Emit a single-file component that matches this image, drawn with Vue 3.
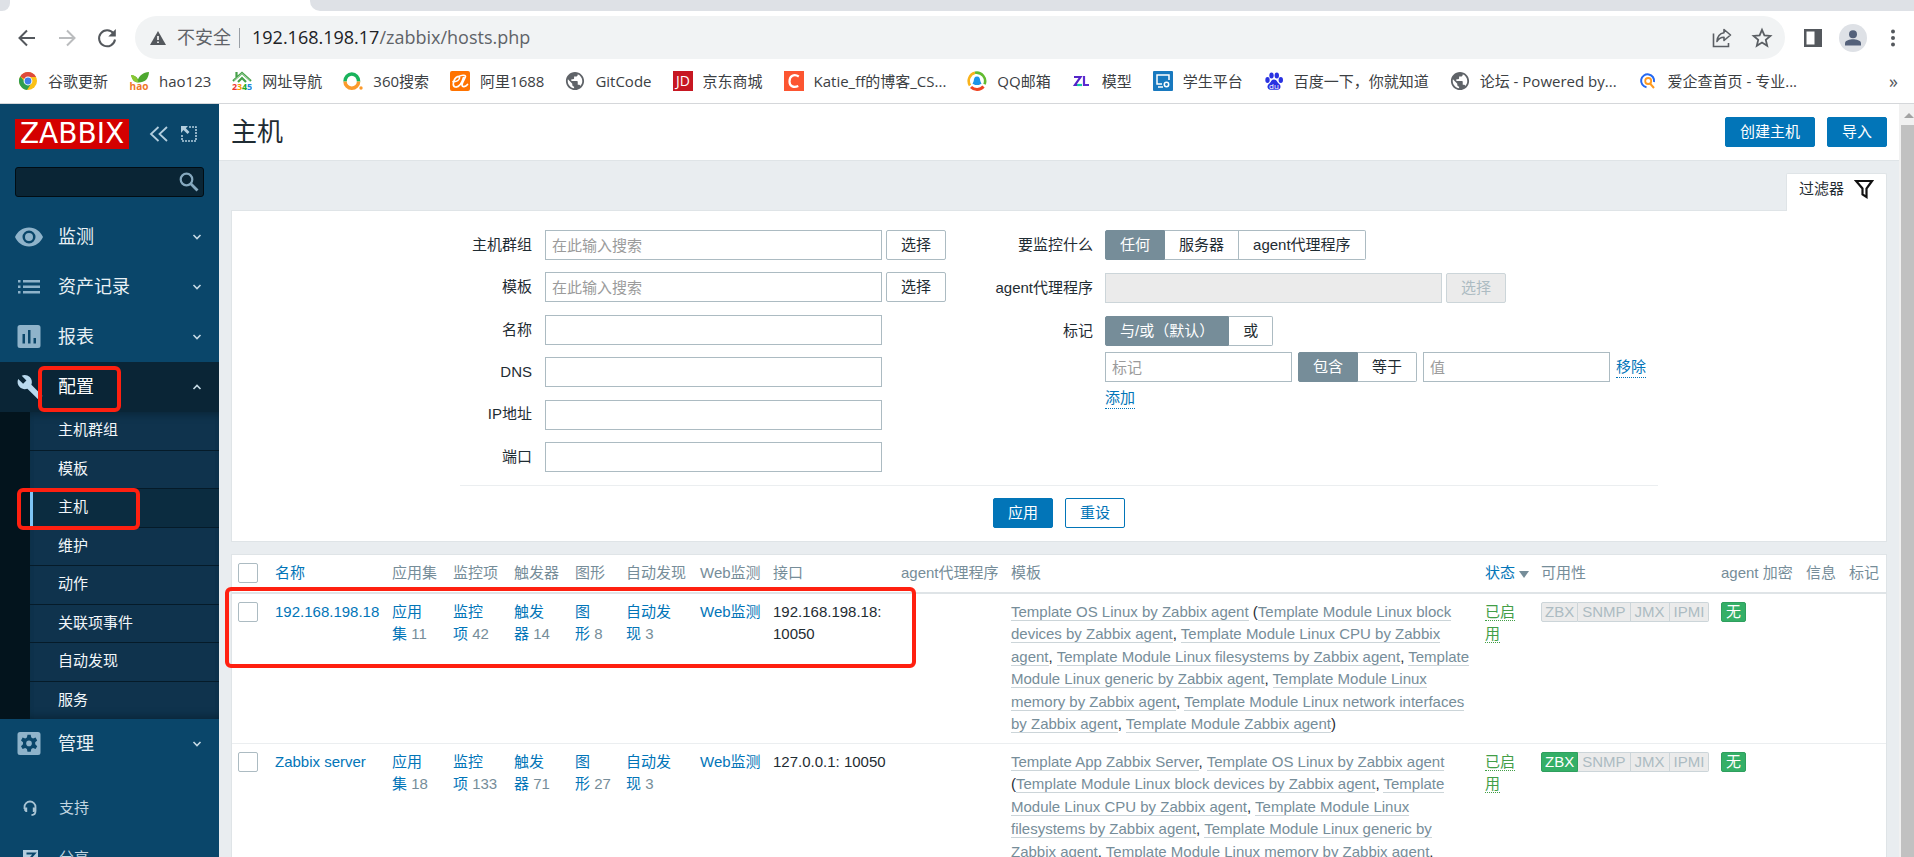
<script setup>
import { ref } from 'vue'

const mainMenu = [
  { id: 'monitoring', label: '监测' },
  { id: 'inventory', label: '资产记录' },
  { id: 'reports', label: '报表' },
  { id: 'config', label: '配置', open: true },
  { id: 'admin', label: '管理' }
]
const configMenu = ['主机群组', '模板', '主机', '维护', '动作', '关联项事件', '自动发现', '服务']

const textFields = [
  { id: 'groups', label: '主机群组', picker: true },
  { id: 'templates', label: '模板', picker: true },
  { id: 'name', label: '名称' },
  { id: 'dns', label: 'DNS' },
  { id: 'ip', label: 'IP地址' },
  { id: 'port', label: '端口' }
]

const monitoredBy = ref('任何')
const evalType = ref('与/或（默认）')
const tagOperator = ref('包含')

const linuxModules = [
  'Template Module Linux block devices by Zabbix agent',
  'Template Module Linux CPU by Zabbix agent',
  'Template Module Linux filesystems by Zabbix agent',
  'Template Module Linux generic by Zabbix agent',
  'Template Module Linux memory by Zabbix agent',
  'Template Module Linux network interfaces by Zabbix agent',
  'Template Module Zabbix agent'
]

const hosts = [
  {
    name: '192.168.198.18',
    counts: [11, 42, 14, 8, 3],
    iface: '192.168.198.18: 10050',
    templates: ['Template OS Linux by Zabbix agent'],
    zbx: false
  },
  {
    name: 'Zabbix server',
    counts: [18, 133, 71, 27, 3],
    iface: '127.0.0.1: 10050',
    templates: ['Template App Zabbix Server', 'Template OS Linux by Zabbix agent'],
    zbx: true
  }
]
const countLabels = ['应用集', '监控项', '触发器', '图形', '自动发现']
const globe = 'M12 2C6.480 2 2 6.480 2 12s4.480 10 10 10 10-4.480 10-10S17.520 2 12 2zm-1 17.930c-3.950-.49-7-3.850-7-7.930 0-.62.080-1.210.210-1.790L9 15v1c0 1.100.9 2 2 2v1.930zm6.900-2.540c-.26-.81-1-1.390-1.900-1.390h-1v-3c0-.55-.45-1-1-1H8v-2h2c.55 0 1-.45 1-1V7h2c1.100 0 2-.9 2-2v-.41c2.930 1.190 5 4.060 5 7.410 0 2.080-.8 3.970-2.100 5.390z'
</script>

<template>
  <div class="window">
    <header class="browser">
      <div class="tabstrip"><i class="strip-left"></i><i class="strip-right"></i></div>
      <div class="toolbar">
        <button class="tool" aria-label="后退">
          <svg width="24" height="24" viewBox="0 0 24 24" fill="none" stroke="#54585d" stroke-width="2"><path d="M20 12H5M12 4.500l-7.500 7.500 7.500 7.500" /></svg>
        </button>
        <button class="tool" aria-label="前进">
          <svg width="24" height="24" viewBox="0 0 24 24" fill="none" stroke="#babcbe" stroke-width="2"><path d="M4 12h15M12 4.500l7.500 7.500-7.500 7.500" /></svg>
        </button>
        <button class="tool" aria-label="重新加载">
          <svg width="24" height="24" viewBox="0 0 24 24" fill="none" stroke="#54585d" stroke-width="2"><path d="M18.500 7.500A8 8 0 1 0 20 13.500" /><path d="M20.800 3v7.500h-7.500z" fill="#54585d" stroke="none" /></svg>
        </button>
        <div class="omnibox">
          <svg class="warn" width="16" height="14" viewBox="0 0 16 14"><path d="M8 0l8 14H0z" fill="#54585d" /><path d="M7.200 5h1.600v4H7.200zM7.200 10.400h1.600V12H7.200z" fill="#fff" /></svg>
          <span class="insecure">不安全</span>
          <i class="split"></i>
          <span class="url"><b>192.168.198.17</b>/zabbix/hosts.php</span>
          <button class="tool share" aria-label="分享">
            <svg width="22" height="22" viewBox="0 0 22 22" fill="none" stroke="#5a5e63" stroke-width="1.600"><path d="M2.500 6.500v13h15v-3.500" /><path d="M13 2.500l6.500 5.500-6.500 5.500v-3.300c-3.500 0-5.500 1.300-7 4.300 .3-4.500 2.500-8 7-8.700z" stroke-linejoin="round" /></svg>
          </button>
          <button class="tool" aria-label="收藏">
            <svg width="22" height="22" viewBox="0 0 22 22" fill="none" stroke="#5a5e63" stroke-width="1.800"><path d="M11 2.800l2.400 5.600 6 .5-4.600 4 1.400 5.900-5.200-3.200-5.200 3.200 1.400-5.900-4.600-4 6-.5z" /></svg>
          </button>
        </div>
        <div class="actions">
          <button class="tool" aria-label="侧边栏">
            <svg width="18" height="18" viewBox="0 0 18 18"><path d="M0 0h18v18H0z" fill="#54585d" /><path d="M2.500 2.500h8v13h-8z" fill="#fff" /></svg>
          </button>
          <button class="avatar" aria-label="用户">
            <svg width="28" height="28" viewBox="0 0 28 28"><circle cx="14" cy="14" r="14" fill="#dee1e6" /><circle cx="14" cy="10.200" r="4" fill="#54617a" /><path d="M6 21.500v-2.300c0-3 5-4 8-4s8 1 8 4v2.300z" fill="#54617a" /></svg>
          </button>
          <button class="tool" aria-label="菜单">
            <svg width="6" height="18" viewBox="0 0 6 18" fill="#54585d"><circle cx="3" cy="2.500" r="2" /><circle cx="3" cy="9" r="2" /><circle cx="3" cy="15.500" r="2" /></svg>
          </button>
        </div>
      </div>
      <nav class="bookmarks">
        <a href="#"><svg viewBox="0 0 20 20"><circle cx="10" cy="10" r="9" fill="#fbc116" /><path d="M10 10L2.200 5.500A9 9 0 0 1 17.800 5.500L18 6H10z" fill="#de4a3c" /><path d="M2.200 5.500A9 9 0 0 0 9 19l4.500-7L10 14z" fill="#2f9e4f" /><circle cx="10" cy="10" r="4.400" fill="#fff" /><circle cx="10" cy="10" r="3.400" fill="#3f7fe8" /></svg>谷歌更新</a>
        <a href="#"><svg viewBox="0 0 20 20"><path d="M9.500 11.500C5 11.500 3 8.500 2 4c4 .5 6 2 7 4.500 1.500-4 5-7 11-7.500-.5 7-4 10.500-10.500 10.500z" fill="#4da82f" /><path d="M2 4c4 .5 6 2 7.500 7.500C5 11.500 3 8.500 2 4z" fill="#8bc832" /><text x="10" y="19" font-size="10" font-weight="bold" text-anchor="middle" fill="#f07828">hao</text></svg>hao123</a>
        <a href="#"><svg viewBox="0 0 20 20"><path d="M1 10l9-8 9 8M4.500 1v5M6 11l4-4 4 4" fill="none" stroke="#45a049" stroke-width="2.200" /><path d="M2 9.500l8-7 8 7" fill="none" stroke="#c5e6c4" stroke-width=".7" /><g font-size="9" font-weight="bold"><text x="0" y="19" fill="#e33">2</text><text x="5" y="19" fill="#f90">3</text><text x="10" y="19" fill="#2a2">4</text><text x="15" y="19" fill="#28d">5</text></g></svg>网址导航</a>
        <a href="#"><svg viewBox="0 0 20 20" fill="none" stroke-width="3.500"><path d="M2 10.500a6.800 7.500 0 0 1 13.600 0" stroke="#19b35c" /><path d="M15.600 10.500a6.800 6.800 0 0 1-13.600 0" stroke="#fb9a2b" /><circle cx="18" cy="17" r="1.700" fill="#fb9a2b" stroke="none" /></svg>360搜索</a>
        <a href="#"><svg viewBox="0 0 20 20"><rect width="20" height="20" rx="2" fill="#ff7300" /><path d="M3 10.500c3.500.5 7-1.500 6.500-4-.4-1.700-3-1.200-4.700 1.500-2 3.500-2.300 7.500.7 8 3.500.4 6.500-4.500 8-9.500M8.500 5.500c3-1.500 7-1.800 7-.2 0 2-3.500 5.700-3.500 8.700 0 2.300 3.500 2 5.500-.5" fill="none" stroke="#fff" stroke-width="1.700" stroke-linecap="round" /></svg>阿里1688</a>
        <a href="#"><svg viewBox="1 1 22 22"><path :d="globe" fill="#5f6368" /></svg>GitCode</a>
        <a href="#"><svg viewBox="0 0 20 20"><rect width="20" height="20" fill="#c71722" /><text x="10" y="15" font-size="14" text-anchor="middle" fill="#fff">JD</text></svg>京东商城</a>
        <a href="#"><svg viewBox="0 0 20 20"><rect width="20" height="20" fill="#fc5531" /><path d="M14.800 5.500C10 2.500 5.500 5 5.500 10.500c0 5 4.500 6.500 8.800 4.500" fill="none" stroke="#fff" stroke-width="2.200" /></svg>Katie_ff的博客_CS...</a>
        <a href="#"><svg viewBox="0 0 20 20" fill="none"><path d="M3 14.500A8.500 8.500 0 0 1 8 1.800" stroke="#f9b31c" stroke-width="2.600" /><path d="M8 1.800a8.500 8.500 0 0 1 9.500 11.500" stroke="#62bb30" stroke-width="2.600" /><path d="M4 16a8.500 8.500 0 0 0 12.500-.5" stroke="#ef4423" stroke-width="3" /><path d="M10 5.500c2.500 0 3 2 3.300 4.500l1.200 3-1.500.2c-.8 1.200-5.200 1.200-6 0L5.500 13l1.200-3c.3-2.500.8-4.500 3.300-4.500z" fill="#1c94e8" /></svg>QQ邮箱</a>
        <a href="#"><svg viewBox="0 0 20 20" fill="none" stroke-width="2.200"><path d="M2 6h6.500L3 14h6.500" stroke="#5424c8" /><path d="M5 14h5" stroke="#18c9a4" /><path d="M12 5v9h5" stroke="#5a2bd0" /></svg>模型</a>
        <a href="#"><svg viewBox="0 0 20 20"><rect width="20" height="20" rx="1" fill="#1879bf" /><path d="M9 13H4V4h12v5M5 16h5" fill="none" stroke="#fff" stroke-width="1.500" /><circle cx="13.500" cy="13.500" r="2.200" fill="none" stroke="#fff" stroke-width="1.500" /></svg>学生平台</a>
        <a href="#"><svg viewBox="0 0 20 20" fill="#2932e1"><ellipse cx="3.500" cy="9" rx="2.200" ry="2.900" /><ellipse cx="7.500" cy="4.500" rx="2.200" ry="2.900" /><ellipse cx="12.800" cy="4.500" rx="2.200" ry="2.900" /><ellipse cx="16.800" cy="9" rx="2.200" ry="2.900" /><path d="M10 8.500c3 0 3 3 5.500 4.800 2 2 .8 5.400-2 5.400H6.500c-3 0-4-3.400-2-5.400C7 11.500 7 8.500 10 8.500z" /><text x="10" y="17.500" font-size="8" text-anchor="middle" fill="#fff">du</text></svg>百度一下，你就知道</a>
        <a href="#"><svg viewBox="1 1 22 22"><path :d="globe" fill="#5f6368" /></svg>论坛 - Powered by...</a>
        <a href="#"><svg viewBox="0 0 20 20" fill="none"><path d="M8.500 16.200A6.500 6.500 0 1 1 16 11" stroke="#2468f2" stroke-width="2" /><circle cx="10.200" cy="10" r="3" stroke="#ff9a1f" stroke-width="1.800" /><path d="M12 12.500l4 4.500" stroke="#ff9a1f" stroke-width="2" /></svg>爱企查首页 - 专业...</a>
        <button class="more" aria-label="更多书签">»</button>
      </nav>
    </header>

    <div class="page">
      <aside class="sidebar">
        <div class="brand">
          <a href="#" class="logo">ZABBIX</a>
          <button class="side-btn" aria-label="折叠侧栏">
            <svg width="20" height="16" viewBox="0 0 20 16" fill="none" stroke="#b3cede" stroke-width="1.800"><path d="M9.500 1l-7.500 7 7.500 7M18 1l-7.500 7 7.500 7" /></svg>
          </button>
          <button class="side-btn" aria-label="隐藏侧栏">
            <svg width="16" height="16" viewBox="0 0 16 16" fill="none" stroke="#b3cede"><path d="M8 1h7v14H1V8" stroke-width="1.600" stroke-dasharray="2 1" /><path d="M0 0h7L4.800 2.200 8.500 6 6.500 8 2.500 4 0 7z" fill="#b3cede" stroke="none" /></svg>
          </button>
        </div>
        <div class="search">
          <input type="text" aria-label="搜索" />
          <button aria-label="搜索按钮">
            <svg width="20" height="20" viewBox="0 0 20 20" fill="none" stroke="#86a9bf"><circle cx="7.500" cy="7.500" r="5.800" stroke-width="2.200" /><path d="M11.800 11.800l6.700 6.700" stroke-width="2.800" /></svg>
          </button>
        </div>
        <ul class="menu">
          <li v-for="m in mainMenu" :key="m.id">
            <a href="#" class="menu-link" :class="{ open: m.open }">
              <svg v-if="m.id === 'monitoring'" width="28" height="28" viewBox="0 0 28 28"><path d="M14 4.500C7.500 4.500 2.500 8.500 0 14c2.500 5.500 7.500 9.500 14 9.500S25.500 19.500 28 14C25.500 8.500 20.500 4.500 14 4.500zm0 16a6.500 6.500 0 1 1 0-13 6.500 6.500 0 0 1 0 13z" /><circle cx="14" cy="14" r="4" /></svg>
              <svg v-else-if="m.id === 'inventory'" width="28" height="28" viewBox="0 0 28 28"><path d="M3 7h2.500v2.500H3zM8 7h17v2.500H8zM3 12.500h2.500V15H3zM8 12.500h17V15H8zM3 18h2.500v2.500H3zM8 18h17v2.500H8z" /></svg>
              <svg v-else-if="m.id === 'reports'" width="28" height="28" viewBox="0 0 28 28"><path fill-rule="evenodd" d="M5 2h18a2.500 2.500 0 0 1 2.500 2.500v18A2.500 2.500 0 0 1 23 25H5a2.500 2.500 0 0 1-2.500-2.500v-18A2.500 2.500 0 0 1 5 2zm2.500 9v9.500H10V11zm5.500-4v13.500h2.500V7zm5.500 8v5.500H21V15z" /></svg>
              <svg v-else-if="m.id === 'config'" width="28" height="28" viewBox="0 0 28 28"><path d="M25.300 22.200L14.900 11.800c1-2.600.5-5.600-1.600-7.700C11.100 1.900 7.800 1.400 5.200 2.700l4.700 4.700-3.300 3.300-4.900-4.700C.5 8.600 1 11.900 3.200 14.100c2.100 2.100 5.100 2.600 7.700 1.600l10.400 10.400c.5.500 1.200.5 1.600 0l2.600-2.600c.5-.4.5-1.100-.2-1.300z" transform="translate(1.500 0)" /></svg>
              <svg v-else width="28" height="28" viewBox="0 0 28 28"><path fill-rule="evenodd" d="M5 2h18a2.500 2.500 0 0 1 2.500 2.500v18A2.500 2.500 0 0 1 23 25H5a2.500 2.500 0 0 1-2.500-2.500v-18A2.500 2.500 0 0 1 5 2zm7.500 2.800l-.6 2.700-1.700 1-2.600-.9-1.600 2.800 2 1.900v2l-2 1.900 1.600 2.800 2.600-.9 1.700 1 .6 2.700h3.200l.6-2.700 1.700-1 2.600.9 1.600-2.800-2-1.900v-2l2-1.900-1.600-2.800-2.600.9-1.700-1-.6-2.700z" /><circle cx="14" cy="13.400" r="2.800" /></svg>
              <span>{{ m.label }}</span>
              <svg class="chev" width="10" height="8" viewBox="0 0 10 8" fill="none"><path :d="m.open ? 'M1.500 6l3.500-3.500L8.500 6' : 'M1.500 2l3.500 3.500L8.500 2'" stroke-width="1.600" /></svg>
              <i v-if="m.open" class="mark mark-menu"></i>
            </a>
            <ul v-if="m.open" class="submenu">
              <li v-for="s in configMenu" :key="s">
                <a href="#" :class="{ selected: s === '主机' }">{{ s }}<i v-if="s === '主机'" class="mark mark-sub"></i></a>
              </li>
            </ul>
          </li>
        </ul>
        <ul class="menu extra">
          <li><a href="#" class="menu-link small">
            <svg width="28" height="18" viewBox="0 0 28 18" fill="none" stroke="#a9c4d4" stroke-width="1.800"><path d="M9.500 10V8a5.500 5.500 0 0 1 11 0v4c0 2.500-1.500 4-4 4" /><path d="M9.200 8.500h3v4.500h-1.500l-1.500-1.500zM20.800 8.500h-3v4.500h1.500l1.500-1.500z" fill="#a9c4d4" stroke="none" /></svg>
            <span>支持</span></a></li>
          <li><a href="#" class="menu-link small">
            <svg width="28" height="16" viewBox="0 0 28 16"><path d="M8 0h15v16H8z" fill="#b3cede" /><path d="M11.500 3.500h8l-8 9h8" fill="none" stroke="#0a466a" stroke-width="2" /></svg>
            <span>分享</span></a></li>
        </ul>
      </aside>

      <main class="main">
        <div class="page-head">
          <h1>主机</h1>
          <button class="btn primary">创建主机</button>
          <button class="btn primary">导入</button>
        </div>

        <div class="content">
          <a href="#" class="filter-tab">过滤器
            <svg width="20" height="20" viewBox="0 0 20 20" fill="none" stroke="#111" stroke-width="2.200"><path d="M2 2h16l-5.500 7.500V18l-4-2.500v-6z" /></svg>
          </a>
          <form class="filter" @submit.prevent>
            <div class="fields">
              <div class="col">
                <div v-for="f in textFields" :key="f.id" class="row">
                  <label :for="f.id">{{ f.label }}</label>
                  <input :id="f.id" class="wide" type="text" :placeholder="f.picker ? '在此输入搜索' : ''" />
                  <button v-if="f.picker" type="button" class="btn gray">选择</button>
                </div>
              </div>
              <div class="col right">
                <div class="row">
                  <span class="lbl">要监控什么</span>
                  <div class="seg">
                    <label v-for="o in ['任何', '服务器', 'agent代理程序']" :key="o" :class="{ on: o === monitoredBy }"><input v-model="monitoredBy" type="radio" name="by" :value="o" />{{ o }}</label>
                  </div>
                </div>
                <div class="row">
                  <label for="proxy">agent代理程序</label>
                  <input id="proxy" class="wide" type="text" disabled />
                  <button type="button" class="btn gray" disabled>选择</button>
                </div>
                <div class="row top">
                  <span class="lbl">标记</span>
                  <div class="tags">
                    <div class="seg">
                      <label v-for="o in ['与/或（默认）', '或']" :key="o" :class="{ on: o === evalType }"><input v-model="evalType" type="radio" name="eval" :value="o" />{{ o }}</label>
                    </div>
                    <div class="tag-row">
                      <input type="text" placeholder="标记" aria-label="标记" />
                      <div class="seg">
                        <label v-for="o in ['包含', '等于']" :key="o" :class="{ on: o === tagOperator }"><input v-model="tagOperator" type="radio" name="op" :value="o" />{{ o }}</label>
                      </div>
                      <input type="text" placeholder="值" aria-label="值" />
                      <button type="button" class="dotted">移除</button>
                    </div>
                    <button type="button" class="dotted">添加</button>
                  </div>
                </div>
              </div>
            </div>
            <div class="submit">
              <button class="btn primary">应用</button>
              <button type="button" class="btn outline">重设</button>
            </div>
          </form>

          <div class="list">
            <i class="mark mark-row"></i>
            <table>
              <colgroup>
                <col class="c-check" /><col class="c-name" /><col class="c-count" /><col class="c-count" /><col class="c-count" /><col class="c-graph" /><col class="c-disc" /><col class="c-web" /><col class="c-iface" /><col class="c-proxy" /><col /><col class="c-status" /><col class="c-avail" /><col class="c-enc" /><col class="c-info" /><col class="c-info" />
              </colgroup>
              <thead>
                <tr>
                  <th><input type="checkbox" aria-label="全选" /></th>
                  <th><a href="#">名称</a></th>
                  <th v-for="c in countLabels" :key="c">{{ c }}</th>
                  <th>Web监测</th>
                  <th>接口</th>
                  <th>agent代理程序</th>
                  <th>模板</th>
                  <th><a href="#" class="sorted">状态</a></th>
                  <th>可用性</th>
                  <th>agent 加密</th>
                  <th>信息</th>
                  <th>标记</th>
                </tr>
              </thead>
              <tbody>
                <tr v-for="h in hosts" :key="h.name">
                  <td><input type="checkbox" :aria-label="h.name" /></td>
                  <td><a href="#">{{ h.name }}</a></td>
                  <td v-for="(c, i) in countLabels" :key="c"><a href="#">{{ c }}</a><span class="num">&nbsp;{{ h.counts[i] }}</span></td>
                  <td><a href="#">Web监测</a></td>
                  <td>{{ h.iface }}</td>
                  <td></td>
                  <td><template v-for="(t, i) in h.templates" :key="t"><template v-if="i">, </template><a href="#" class="tpl">{{ t }}</a></template> (<template v-for="(t, i) in linuxModules" :key="t"><template v-if="i">, </template><a href="#" class="tpl">{{ t }}</a></template>)</td>
                  <td><a href="#" class="enabled">已启用</a></td>
                  <td><span class="avail"><b :class="{ ok: h.zbx }">ZBX</b><b>SNMP</b><b>JMX</b><b>IPMI</b></span></td>
                  <td><span class="avail"><b class="ok">无</b></span></td>
                  <td></td>
                  <td></td>
                </tr>
              </tbody>
            </table>
          </div>
        </div>
      </main>
      <div class="scrollbar"><i class="arrow"></i><i class="thumb"></i></div>
    </div>
  </div>
</template>

<style>
body { margin: 0; overflow: hidden; }
</style>

<style scoped>
* { box-sizing: border-box; }
.window {
  display: flex;
  flex-direction: column;
  height: 100vh;
  overflow: hidden;
  font: 15px/1.5 "Liberation Sans", "Noto Sans CJK SC", sans-serif;
  color: #1f2c33;
}
button, input { font: inherit; color: inherit; }
button { border: 0; padding: 0; background: none; cursor: pointer; }
a { color: #0275b8; text-decoration: none; }
ul { list-style: none; margin: 0; padding: 0; }

/* browser chrome */
.browser { flex: none; background: #fff; border-bottom: 1px solid #d5d7da; font-family: "Open Sans", "Noto Sans CJK SC", sans-serif; }
.tabstrip { display: flex; justify-content: space-between; height: 11px; }
.strip-left { width: 10px; background: #dee1e6; border-radius: 0 0 8px 0; }
.strip-right { flex: 1; margin-left: 300px; background: #dee1e6; border-radius: 0 0 0 10px; }
.toolbar { display: flex; align-items: center; gap: 16px; padding: 5px 9px 0 15px; }
.tool { display: flex; align-items: center; justify-content: center; width: 24px; height: 24px; }
.omnibox { flex: 1; display: flex; align-items: center; height: 43px; padding: 0 11px 0 15px; background: #f1f3f4; border-radius: 22px; color: #5f6368; }
.insecure { margin-left: 11px; font-size: 18px; }
.split { width: 1px; height: 20px; margin: 0 12px 0 8px; background: #9aa0a6; }
.url { flex: 1; font-size: 18px; }
.url b { font-weight: 400; color: #202124; }
.share { margin-right: 16px; }
.actions { display: flex; align-items: center; gap: 14px; }
.avatar { display: flex; }
.bookmarks { display: flex; align-items: center; gap: 21px; height: 44px; padding: 0 16px 0 18px; white-space: nowrap; overflow: hidden; }
.bookmarks a { display: flex; align-items: center; gap: 10px; color: #3c4043; }
.bookmarks svg { width: 20px; height: 20px; }
.more { margin-left: auto; font-size: 18px; color: #54585d; }

.page { flex: 1; display: flex; min-height: 0; }

/* sidebar */
.sidebar { flex: none; width: 219px; background: #0a466a; overflow: hidden; }
.brand { display: flex; align-items: center; gap: 12px; padding: 15px 15px 0; }
.logo { width: 114px; background: #d40000; color: #fff; font: 28px/30px "DejaVu Sans", sans-serif; text-align: center; }
.side-btn { display: flex; }
.side-btn:nth-child(2) { margin-left: 8px; }
.search { display: flex; align-items: center; height: 30px; margin: 18px 15px 15px; background: #0a2535; border: 1px solid #010d14; border-radius: 3px; padding-right: 4px; }
.search input { flex: 1; min-width: 0; background: none; border: 0; outline: 0; color: #fff; }
.search button { display: flex; }
.menu-link { position: relative; display: flex; align-items: center; height: 50px; padding: 0 17px 0 15px; gap: 15px; color: #e9f1f5; font-size: 18px; fill: #8fb3ca; stroke: none; }
.menu-link span { flex: 1; }
.menu-link.open { background: #0a2536; color: #fff; fill: #b9d9ee; }
.chev { stroke: #c5d9e4; }
.submenu { background: #0f334d; border-left: 30px solid #03141d; box-shadow: inset 0 8px 8px -6px #0a2536, inset 0 -8px 8px -6px #0a2536; }
.submenu a { position: relative; display: block; padding: 7px 0 8px 28px; color: #f2f7fa; }
.submenu li + li { border-top: 1px solid #051b29; }
.submenu .selected { background: #0b2c40; border-left: 3px solid #7fc5f5; padding-left: 25px; }
.extra { margin-top: 14px; }
.small { font-size: 15px; gap: 16px; color: #c3d6e1; }

.mark { position: absolute; border: 4px solid #ff2010; border-radius: 6px; pointer-events: none; z-index: 2; }
.mark-menu { left: 38px; top: 4px; width: 83px; height: 46px; }
.mark-sub { left: -16px; top: -1px; width: 123px; height: 42px; }
.mark-row { left: -7px; top: 32px; width: 691px; height: 81px; }

/* main area */
.main { flex: 1; min-width: 0; background: #e9edf0; overflow: hidden; }
.page-head { display: flex; align-items: center; gap: 12px; height: 57px; padding: 0 12px 0 12px; background: #fff; border-bottom: 1px solid #dfe4e7; }
h1 { flex: 1; margin: 0; font-size: 26px; font-weight: 400; }
.btn { height: 30px; padding: 0 14px; border: 1px solid #0275b8; border-radius: 2px; line-height: 28px; white-space: nowrap; }
.primary { background: #0275b8; color: #fff; }
.outline { background: #fff; color: #0275b8; }
.gray { background: #fff; border-color: #acbbc2; }
.gray:disabled { background: #ebebeb; border-color: #ccd5d9; color: #acbbc2; }
.content { display: flex; flex-direction: column; padding: 12px 12px 0 12px; }
.filter-tab { align-self: flex-end; display: flex; gap: 10px; height: 38px; padding: 4px 12px 0 12px; background: #fff; border: 1px solid #dfe4e7; border-bottom: 0; border-radius: 2px 2px 0 0; color: #1f2c33; z-index: 1; }
.filter-tab svg { margin-top: 1px; }
.filter { margin-top: -1px; padding: 19px 0 13px; background: #fff; border: 1px solid #dfe4e7; }
.fields { display: flex; gap: 49px; max-width: 1198px; margin: 0 auto; padding-bottom: 13px; border-bottom: 1px solid #ebeef0; }
.col { display: flex; flex-direction: column; justify-content: space-between; min-height: 242px; }
.col.right { justify-content: flex-start; gap: 13px; }
.row { display: flex; align-items: center; gap: 4px; }
.row > label, .lbl { width: 72px; margin-right: 9px; text-align: right; white-space: nowrap; }
.right .row > label, .right .lbl { width: 98px; margin-right: 8px; }
.row.top { align-items: flex-start; }
.row.top .lbl { line-height: 30px; }
.row input[type="text"] { width: 187px; height: 30px; padding: 0 6px; border: 1px solid #acbbc2; border-radius: 0; background: #fff; outline: 0; }
.row input[type="text"].wide { width: 337px; }
.row input[type="text"]:disabled { background: #ebebeb; border-color: #ccd5d9; }
input::placeholder { color: #9b9b9b; opacity: 1; }
.seg { display: flex; align-self: flex-start; }
.seg label { position: relative; height: 30px; padding: 0 14px; line-height: 28px; border: 1px solid #acbbc2; border-left: 0; background: #fff; white-space: nowrap; }
.seg label:first-child { border-left: 1px solid #acbbc2; border-radius: 2px 0 0 2px; }
.seg label:last-child { border-radius: 0 2px 2px 0; }
.seg label.on { background: #768d99; border-color: #768d99; color: #fff; }
.seg input { position: absolute; opacity: 0; margin: 0; }
.tags { display: flex; flex-direction: column; align-items: flex-start; gap: 6px; }
.tag-row { display: flex; align-items: center; gap: 6px; }
.dotted { color: #0275b8; border-bottom: 1px dotted #0275b8; line-height: 20px; }
.submit { display: flex; justify-content: center; gap: 12px; padding-top: 12px; }

/* hosts table */
.list { position: relative; margin-top: 12px; background: #fff; border: 1px solid #dfe4e7; }
table { width: 100%; table-layout: fixed; border-collapse: collapse; }
th, td { padding: 7px 6px; text-align: left; vertical-align: top; font-weight: 400; }
th { color: #768d99; white-space: nowrap; border-bottom: 2px solid #dfe4e7; }
td { border-bottom: 1px solid #ebeef0; }
.c-check { width: 37px; }
.c-name { width: 117px; }
.c-count { width: 61px; }
.c-graph { width: 51px; }
.c-disc { width: 74px; }
.c-web { width: 73px; }
.c-iface { width: 128px; }
.c-proxy { width: 110px; }
.c-status { width: 56px; }
.c-avail { width: 180px; }
.c-enc { width: 85px; }
.c-info { width: 43px; }
input[type="checkbox"] { display: block; appearance: none; width: 20px; height: 20px; margin: 1px 0 0; border: 1px solid #acbbc2; border-radius: 2px; background: #fff; }
.sorted::after { content: ""; display: inline-block; margin-left: 4px; vertical-align: middle; border: 5px solid transparent; border-top: 7px solid #768d99; border-bottom: 0; }
.num { color: #768d99; }
.tpl { color: #768d99; border-bottom: 1px solid #ccd5d9; }
.enabled { color: #429e47; border-bottom: 1px dotted #429e47; }
.avail { display: inline-flex; margin-top: 1px; vertical-align: top; }
.avail b { padding: 0 4px; font-weight: 400; line-height: 18px; background: #ebebeb; color: #acbbc2; border: 1px solid #ccd5d9; border-left-width: 0; }
.avail b:first-child { border-left-width: 1px; border-radius: 2px 0 0 2px; padding: 0 3px; }
.avail b:last-child { border-radius: 0 2px 2px 0; }
.avail b:only-child { border-radius: 2px; padding: 0 4px; }
.avail .ok { background: #34af67; border-color: #2f9f5e; color: #fff; }

.scrollbar { flex: none; width: 15px; padding-left: 2px; background: #f1f1f1; overflow: hidden; display: flex; flex-direction: column; }
.arrow { margin: 9px 0 7px 3px; width: 0; border: 5px solid transparent; border-bottom-color: #a3a3a3; border-top: 0; }
.thumb { flex: 1; background: #c1c1c1; }
</style>
